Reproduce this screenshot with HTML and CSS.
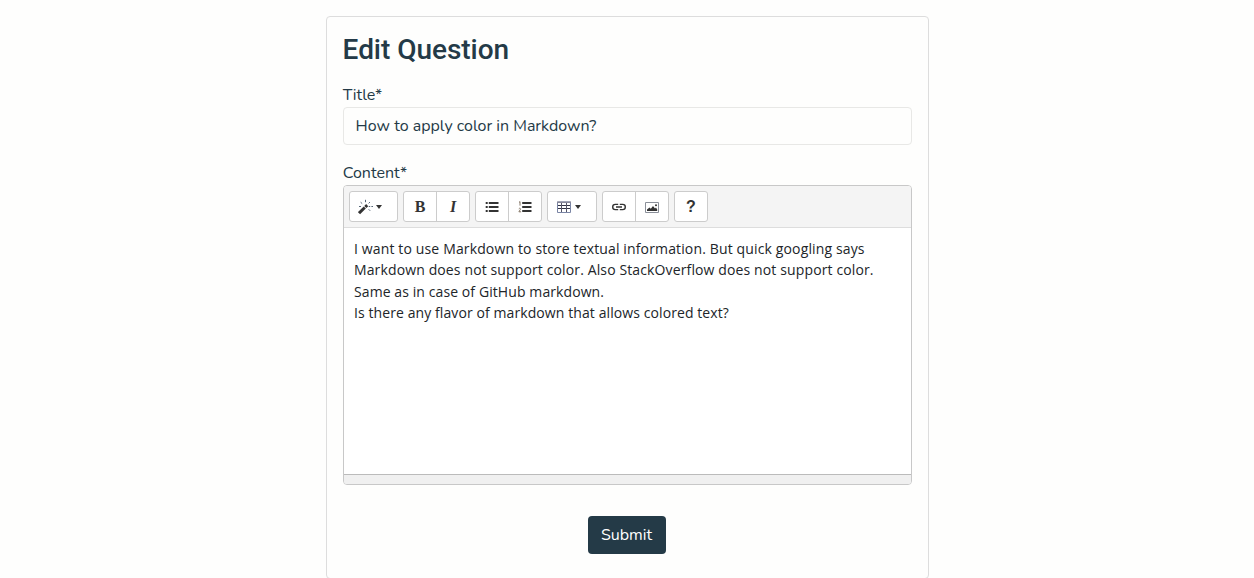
FILE: index.html
```html
<!DOCTYPE html>
<html lang="en">
<head>
<meta charset="utf-8">
<title>Edit Question</title>
<link rel="stylesheet" href="styles.css">
</head>
<body>
<main class="card">
  <h1 class="heading">Edit Question</h1>
  <form class="form">
    <div class="label">Title*</div>
    <div class="input">How to apply color in Markdown?</div>
    <div class="label label-content">Content*</div>
    <div class="editor">
      <div class="toolbar">
        <div class="group"><div class="btn wide">
          <svg width="16" height="16" viewBox="0 0 16 16"><path d="M1 14.2L6.8 8.5" stroke="#333" stroke-width="3"/><path d="M7.3 8L9.2 6.1" stroke="#333" stroke-width="3"/><path d="M2.6 3.2l1.6 1.4M7.5 .8v2.4M12 3l-1.4 1.4M10.8 7.5h1.4M13.4 7.5h1.6M10.7 10.3l1.5 1.5M1 7.5h2" stroke="#567" stroke-width="1" fill="none"/></svg><i class="caret"></i>
        </div></div>
        <div class="group"><div class="btn bold">B</div><div class="btn italic">I</div></div>
        <div class="group">
          <div class="btn"><svg width="14" height="14" viewBox="0 0 14 14"><path d="M.7 3h2M.7 7h2M.7 11h2M3.8 3h9.7M3.8 7h9.7M3.8 11h9.7" stroke="#333" stroke-width="2"/></svg></div>
          <div class="btn"><svg width="14" height="14" viewBox="0 0 14 14"><path d="M4.2 3h9.3M4.2 7h9.3M4.2 11h9.3" stroke="#333" stroke-width="2"/><path d="M1 2.4l1-.8v4M.8 8.8c.8-1 2.1-.3 1.6.6L.9 11.8h2.2" stroke="#765" stroke-width=".9" fill="none"/></svg></div>
        </div>
        <div class="group"><div class="btn wide table">
          <svg width="14" height="12" viewBox="0 0 14 12"><path d="M.5 1h13v10.5H.5z" fill="none" stroke="#7a85a5"/><path d="M0 1.2h14" stroke="#889" stroke-width="1.4"/><path d="M1 4.5h12M1 7.5h12" stroke="#334" stroke-width="1"/><path d="M4.5 2v9M9.5 2v9" stroke="#556" stroke-width="1"/></svg><i class="caret"></i>
        </div></div>
        <div class="group">
          <div class="btn"><svg width="16" height="14" viewBox="0 0 16 14"><path d="M7.2 9.6H4.3a2.6 2.6 0 0 1 0-5.2h2.9M8.8 4.4h2.9a2.6 2.6 0 0 1 0 5.2H8.8M5 7h6" stroke="#333" stroke-width="1.4" fill="none"/></svg></div>
          <div class="btn"><svg width="16" height="14" viewBox="0 0 16 14"><path d="M1.5 2.5h13v10h-13z" fill="#fff" stroke="#8a8f99"/><path d="M3 11V9.5l2.5-2 1.3 1.2L9 6l2 2.5 1-.9 1.2 1.9V11z" fill="#333"/><circle cx="12" cy="5.3" r="1" fill="#333"/></svg></div>
        </div>
        <div class="group"><div class="btn help">?</div></div>
      </div>
      <div class="editable">
        <p class="wide-line">I want to use Markdown to store textual information. But quick googling says</p>
        <p class="full-line">Markdown does not support color. Also StackOverflow does not support color.</p>
        <p>Same as in case of GitHub markdown.</p>
        <p>Is there any flavor of markdown that allows colored text?</p>
      </div>
      <div class="statusbar"></div>
    </div>
    <div class="actions"><button class="submit" type="button">Submit</button></div>
  </form>
</main>
</body>
</html>
```
FILE: styles.css
```css
* { box-sizing: border-box; }
html { overflow: hidden; }
body { margin: 0; padding-top: 16px; background: #fefefd; color: #243a47; font-family: Nunito, "Open Sans", sans-serif; font-size: 16px; }
.card { width: 603px; height: 563px; margin-left: 326px; padding: 16px; border: 1px solid #ddd; border-radius: 4px; }
.heading { margin: 0; height: 33px; font: 500 28px/33px Roboto, sans-serif; letter-spacing: -.04px; text-indent: -.4px; white-space: nowrap; }
.label { height: 24px; margin-top: 17px; line-height: 24px; font-weight: 400; text-indent: -.3px; white-space: nowrap; }
.label-content { margin-top: 16px; }
.input { height: 38px; padding: 0 12px; border: 1px solid #e8e8e6; border-radius: 4px; line-height: 36px; font-weight: 400; text-indent: -.4px; white-space: nowrap; }
.editor { height: 300px; display: flex; flex-direction: column; border: 1px solid #c8c8c8; border-radius: 4px; overflow: hidden; background: #fff; }
.toolbar { height: 42px; flex: none; display: flex; gap: 5px; padding: 5px; background: #f4f4f4; border-bottom: 1px solid #ddd; }
.group { display: flex; height: 31px; border: 1px solid #ccc; border-radius: 3px; background: #fff; }
.btn { width: 32px; display: flex; align-items: center; justify-content: center; color: #333; }
.btn + .btn { width: 33px; border-left: 1px solid #ccc; }
.group .wide { width: 47px; gap: 2px; padding-right: 7px; }
.group .table { width: 48px; gap: 4px; padding-right: 6px; }
.caret { border: 3px solid transparent; border-top: 4px solid #333; border-bottom: 0; }
.bold { font: bold 16px "Liberation Serif", serif; }
.italic { font: italic bold 16px "Liberation Serif", serif; }
.help { font: bold 16px "Liberation Sans", sans-serif; }
.editable { flex: 1; padding: 10px; font: 400 14px/21.45px "Open Sans", sans-serif; letter-spacing: .09px; color: #212529; }
.editable p { margin: 0; white-space: nowrap; }
.editable .wide-line { letter-spacing: .14px; }
.editable .full-line { letter-spacing: .125px; }
.statusbar { height: 10px; border-top: 1px solid #bbb; background: #f0f0f0; flex: none; }
.actions { display: flex; justify-content: center; padding: 31px 1px 0 0; }
.submit { width: 78px; height: 38px; margin-right: 1px; padding: 0; border: 0; border-radius: 4px; background: #243a47; color: #fff; font: 400 16px/36px Nunito, "Open Sans", sans-serif; white-space: nowrap; }
```
